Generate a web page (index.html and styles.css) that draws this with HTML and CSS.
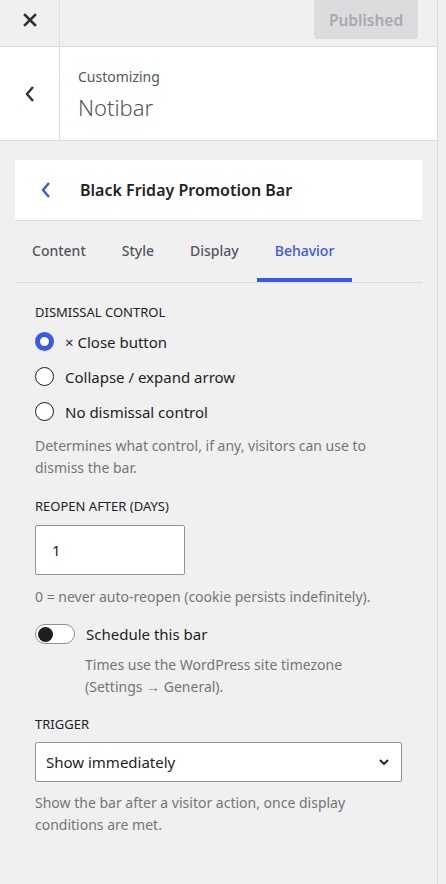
FILE: index.html
```html
<!DOCTYPE html>
<html>
<head>
<meta charset="utf-8">
<link rel="stylesheet" href="styles.css">
</head>
<body>
<div class="panel">
  <div class="topbar">
    <div class="close-box">
      <svg width="14" height="14" viewBox="0 0 14 14"><path d="M2 2L12 12M12 2L2 12" stroke="#2c3338" stroke-width="2.6" stroke-linecap="square"/></svg>
    </div>
    <div class="publish">Published</div>
  </div>
  <div class="header">
    <div class="back-box">
      <svg width="12" height="18" viewBox="0 0 12 18"><path d="M9 2L3 9L9 16" fill="none" stroke="#2c3338" stroke-width="2.4"/></svg>
    </div>
    <div class="header-text">
      <div class="customizing">Customizing</div>
      <div class="title">Notibar</div>
    </div>
  </div>
  <div class="section">
    <div class="card">
      <svg class="card-back" width="12" height="18" viewBox="0 0 12 18"><path d="M9 2L3 9L9 16" fill="none" stroke="#3858e9" stroke-width="2.4"/></svg>
      <div class="card-title">Black Friday Promotion Bar</div>
    </div>
    <div class="tabs">
      <div class="tab">Content</div>
      <div class="tab">Style</div>
      <div class="tab">Display</div>
      <div class="tab active">Behavior</div>
    </div>
    <div class="body">
      <div class="label">Dismissal control</div>
      <div class="radios">
        <div class="radio-row"><span class="radio checked"></span><span>× Close button</span></div>
        <div class="radio-row"><span class="radio"></span><span>Collapse / expand arrow</span></div>
        <div class="radio-row"><span class="radio"></span><span>No dismissal control</span></div>
      </div>
      <p class="help">Determines what control, if any, visitors can use to dismiss the bar.</p>

      <div class="label label-gap">Reopen after (days)</div>
      <div class="input">1</div>
      <p class="help help-one">0 = never auto-reopen (cookie persists indefinitely).</p>

      <div class="toggle-row">
        <span class="toggle"><span class="knob"></span></span>
        <span class="toggle-label">Schedule this bar</span>
      </div>
      <p class="help toggle-help">Times use the WordPress site timezone (Settings → General).</p>

      <div class="label trigger-label">Trigger</div>
      <div class="select">
        <span>Show immediately</span>
        <svg width="12" height="8" viewBox="0 0 12 8"><path d="M2 2L6 6L10 2" fill="none" stroke="#1e1e1e" stroke-width="1.8"/></svg>
      </div>
      <p class="help help-last">Show the bar after a visitor action, once display conditions are met.</p>
    </div>
  </div>
</div>
</body>
</html>
```

FILE: styles.css
```css
* { box-sizing: border-box; }
html, body { margin: 0; padding: 0; }
body {
  background: #f0f0f1;
  font-family: "Noto Sans", "Open Sans", sans-serif;
  color: #1d2327;
  width: 446px;
  height: 884px;
  overflow: hidden;
}
.panel {
  width: 438px;
  height: 884px;
  border-right: 1px solid #dcdcde;
}
.topbar {
  height: 47px;
  display: flex;
  border-bottom: 1px solid #dcdcde;
}
.close-box {
  width: 60px;
  border-right: 1px solid #dcdcde;
  display: flex;
  align-items: center;
  justify-content: center;
  padding-bottom: 6px;
}
.publish {
  margin-left: auto;
  margin-right: 19px;
  width: 104px;
  height: 39px;
  background: #dcdcde;
  border-radius: 0 0 4px 4px;
  color: #a7aaad;
  font-weight: 600;
  font-size: 15.5px;
  display: flex;
  align-items: center;
  justify-content: center;
}
.header {
  height: 94px;
  background: #fff;
  display: flex;
  border-bottom: 1px solid #dcdcde;
}
.back-box {
  width: 60px;
  border-right: 1px solid #dcdcde;
  display: flex;
  align-items: center;
  justify-content: center;
}
.header-text {
  padding-left: 18px;
  padding-top: 19px;
  color: #50575e;
}
.customizing { font-size: 14px; line-height: 22px; }
.title { font-size: 22px; line-height: 30px; font-weight: 300; margin-top: 4px; }
.section { padding: 19px 15px 0 15px; }
.card {
  height: 61px;
  background: #fff;
  border-bottom: 1px solid #dcdcde;
  display: flex;
  align-items: center;
  padding-left: 25px;
}
.card-title {
  font-size: 16px;
  font-weight: 600;
  margin-left: 28px;
  color: #1d2327;
}
.tabs {
  display: flex;
  height: 62px;
  border-bottom: 1px solid #dcdcde;
}
.tab {
  padding: 0 18px;
  display: flex;
  align-items: center;
  font-size: 14px;
  font-weight: 500;
  color: #50575e;
  border-bottom: 4px solid transparent;
  padding-top: 1px;
}
.tab.active { color: #3858e9; border-bottom-color: #3858e9; }
.tab:first-child { padding-left: 17px; }
.body { padding: 20px 20px 0 20px; }
.label {
  font-size: 13px;
  text-transform: uppercase;
  line-height: 18px;
  color: #1d2327;
}
.radios { margin-top: 3px; }
.radio-row {
  display: flex;
  align-items: center;
  height: 35px;
  font-size: 15px;
  color: #1e1e1e;
}
.radio {
  width: 19px;
  height: 19px;
  border-radius: 50%;
  border: 1.5px solid #1e1e1e;
  background: #fff;
  margin-right: 11px;
  flex: none;
}
.radio.checked { border: 5px solid #3858e9; }
.help {
  margin: 6px 0 0 0;
  font-size: 14px;
  line-height: 22px;
  color: #757575;
}
.label-gap { margin-top: 18px; }
.input {
  margin-top: 10px;
  width: 150px;
  height: 50px;
  border: 1px solid #949494;
  border-radius: 2px;
  background: #fff;
  font-size: 15px;
  display: flex;
  align-items: center;
  padding-left: 16px;
}
.help-one { margin-top: 11px; }
.toggle-row {
  margin-top: 15px;
  display: flex;
  align-items: center;
  height: 22px;
}
.toggle {
  width: 40px;
  height: 20px;
  border: 1px solid #8c8f94;
  border-radius: 10px;
  background: #fff;
  display: flex;
  align-items: center;
  padding-left: 2px;
  margin-right: 11px;
}
.knob {
  width: 15px;
  height: 15px;
  border-radius: 50%;
  background: #1e1e1e;
}
.toggle-label { font-size: 15px; color: #1e1e1e; }
.toggle-help { margin-left: 50px; margin-top: 9px; }
.trigger-label { margin-top: 17px; }
.select {
  margin-top: 9px;
  width: 367px;
  height: 40px;
  border: 1px solid #949494;
  border-radius: 2px;
  background: #fff;
  display: flex;
  align-items: center;
  justify-content: space-between;
  padding: 0 11px 0 10px;
  font-size: 15px;
  color: #1e1e1e;
}
.help-last { margin-top: 10px; }
```
